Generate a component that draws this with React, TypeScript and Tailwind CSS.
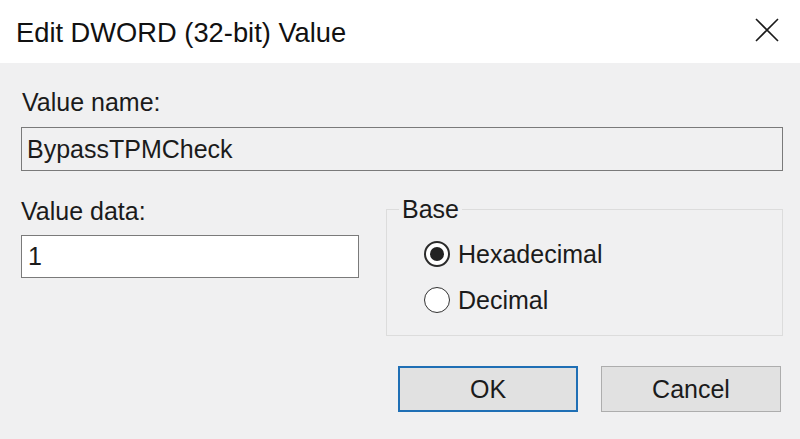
import { useState } from "react";

type Base = "hex" | "dec";

function Radio({ checked, label, onSelect }: { checked: boolean; label: string; onSelect: () => void }) {
  return (
    <label className="flex h-[30px] cursor-default items-center gap-[8px]" onClick={onSelect}>
      <span
        className={
          checked
            ? "flex h-[26px] w-[26px] items-center justify-center rounded-full border-[2px] border-[#2b2b2b] bg-white"
            : "flex h-[26px] w-[26px] items-center justify-center rounded-full border-[1.5px] border-[#333333] bg-white"
        }
      >
        {checked && <span className="h-[14px] w-[14px] rounded-full bg-[#222222]" />}
      </span>
      <span>{label}</span>
    </label>
  );
}

export default function App() {
  const [base, setBase] = useState<Base>("hex");

  return (
    <div className="flex h-[439px] w-[800px] flex-col overflow-hidden bg-[#f0f0f1] font-['Liberation_Sans',Arial,sans-serif] text-[25px] leading-[28px] text-[#1b1b1b]">
      {/* title bar */}
      <div className="flex h-[63px] shrink-0 items-center justify-between bg-white pl-[16px] pr-[21px]">
        <span className="mt-[2px] text-[27.3px] leading-[32px] text-[#111111]">Edit DWORD (32-bit) Value</span>
        <svg width="24" height="24" viewBox="0 0 24 24" className="mt-[-3px]">
          <path d="M1 1 L23 23 M23 1 L1 23" stroke="#1a1a1a" strokeWidth="1.6" fill="none" />
        </svg>
      </div>

      <div className="flex flex-col pl-[21px] pr-[17px] pt-[25px]">
        <span className="pl-[1px]">Value name:</span>
        <input
          readOnly
          defaultValue="BypassTPMCheck"
          className="mt-[11px] h-[44px] w-full border border-[#7a7a7a] bg-[#f0f0f1] pl-[5px] text-[25px] text-[#1b1b1b] outline-none"
        />

        <div className="mt-[24px] flex items-start gap-[27px]">
          <div className="flex w-[338px] flex-col pt-[2px]">
            <span>Value data:</span>
            <input
              readOnly
              defaultValue="1"
              className="mt-[10px] h-[43px] w-full border border-[#7a7a7a] bg-white pl-[6px] text-[25px] text-[#1b1b1b] outline-none"
            />
          </div>

          <fieldset className="flex-1 border border-[#dcdcdc] pb-[20px] pl-[37px]">
            <legend className="ml-[-25px] px-[3px]">Base</legend>
            <div className="mt-[16px] flex flex-col gap-[16px]">
              <Radio checked={base === "hex"} label="Hexadecimal" onSelect={() => setBase("hex")} />
              <Radio checked={base === "dec"} label="Decimal" onSelect={() => setBase("dec")} />
            </div>
          </fieldset>
        </div>

        <div className="mt-[30px] flex justify-end gap-[23px] pr-[2px]">
          <button className="h-[46px] w-[180px] border-[2px] border-[#1f6fb5] bg-[#e1e1e1] text-[25px] text-[#1b1b1b]">
            OK
          </button>
          <button className="h-[46px] w-[180px] border border-[#adadad] bg-[#e1e1e1] text-[25px] text-[#1b1b1b]">
            Cancel
          </button>
        </div>
      </div>
    </div>
  );
}
